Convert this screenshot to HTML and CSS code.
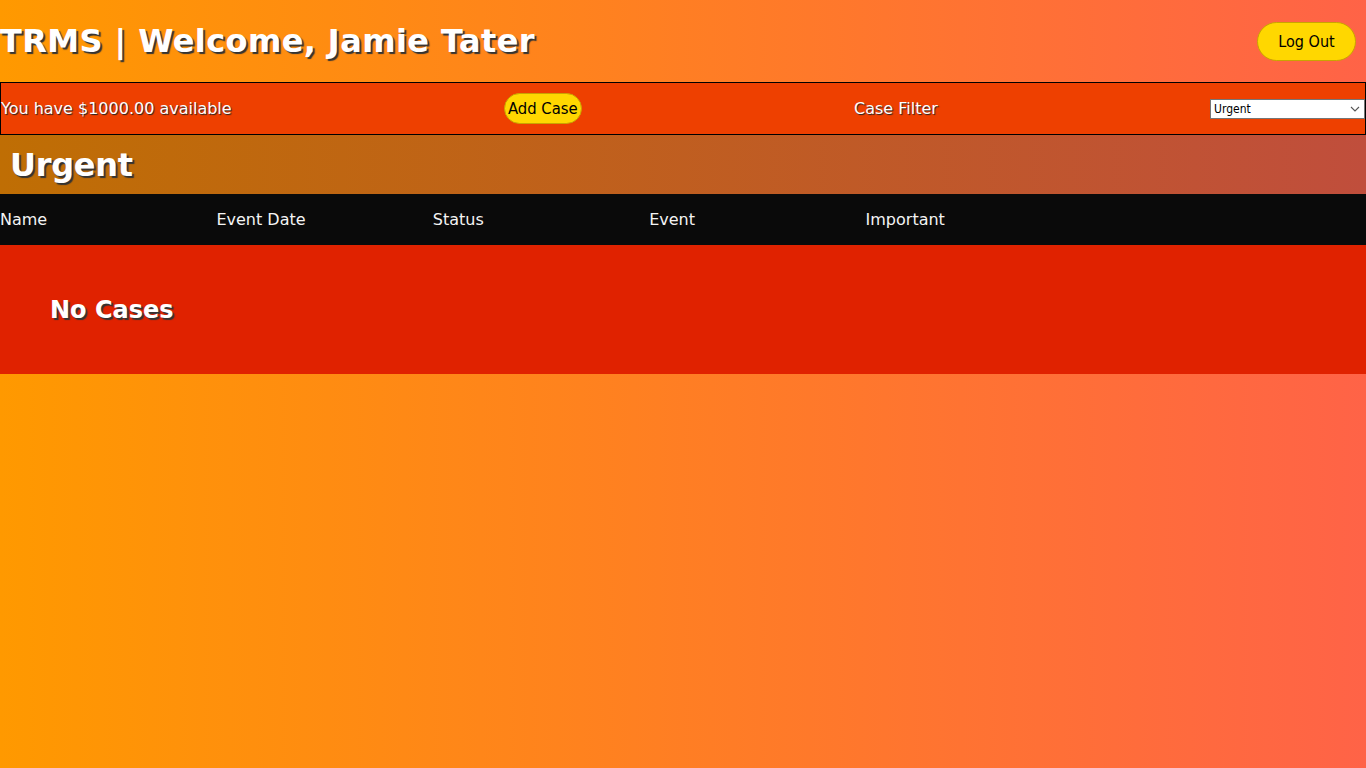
FILE: index.html
```html
<!DOCTYPE html>
<html lang="en">
<head>
<meta charset="utf-8">
<title>TRMS</title>
<link rel="stylesheet" href="styles.css">
</head>
<body>
<header class="top">
  <h1 class="title">TRMS | Welcome, Jamie Tater</h1>
  <button class="pill logout">Log Out</button>
</header>
<div class="toolbar">
  <span class="tb-text">You have $1000.00 available</span>
  <button class="pill add">Add Case</button>
  <span class="tb-text">Case Filter</span>
  <select class="filter">
    <option>Urgent</option>
    <option>All</option>
  </select>
</div>
<h2 class="section">Urgent</h2>
<div class="thead">
  <span>Name</span>
  <span>Event Date</span>
  <span>Status</span>
  <span>Event</span>
  <span>Important</span>
</div>
<div class="empty">
  <h3 class="empty-text">No Cases</h3>
</div>
</body>
</html>
```

FILE: styles.css
```css
html {
  min-height: 100%;
  background: linear-gradient(to right, #ff9900, #ff6347);
}
body {
  margin: 0;
  min-height: 768px;
  font-family: "DejaVu Sans", Verdana, sans-serif;
  color: #fff;
}
.top {
  height: 82px;
  display: flex;
  align-items: center;
  justify-content: space-between;
  padding-right: 10px;
}
.title {
  margin: 0;
  font-size: 32px;
  font-weight: bold;
  color: #fff;
  text-shadow: 2px 2px 1px #333;
  letter-spacing: 0.4px;
}
.pill {
  font-family: "DejaVu Sans Condensed", "DejaVu Sans", sans-serif;
  background: #ffd700;
  color: #000;
  border: 1px solid #c9a400;
  font-size: 16px;
  cursor: pointer;
}
.logout {
  width: 99px;
  height: 39px;
  border-radius: 20px;
}
.toolbar {
  height: 51px;
  border: 1px solid #000;
  background: #ee4000;
  display: flex;
  align-items: center;
  justify-content: space-between;
}
.tb-text {
  font-size: 16px;
  text-shadow: 1px 1px 1px #222;
}
.add {
  width: 78px;
  height: 31px;
  border-radius: 16px;
  padding: 0;
  font-size: 16.5px;
}
.filter {
  width: 155px;
  height: 20px;
  padding: 0 0 0 3px;
  font-family: "DejaVu Sans Condensed", "DejaVu Sans", sans-serif;
  font-size: 12px;
  color: #000;
  border: 1px solid #767676;
  border-radius: 0;
  appearance: none;
  -webkit-appearance: none;
  background: #fff url("data:image/svg+xml,%3Csvg xmlns='http://www.w3.org/2000/svg' width='10' height='6' viewBox='0 0 10 6'%3E%3Cpath d='M1 1l4 4 4-4' fill='none' stroke='%23555' stroke-width='1.1'/%3E%3C/svg%3E") no-repeat right 4px center;
}
.section {
  margin: 0;
  height: 59px;
  line-height: 60px;
  padding-left: 10px;
  font-size: 32px;
  font-weight: bold;
  background: linear-gradient(to right, #bf6e04, #c04e3c);
  text-shadow: 2px 2px 1px #333;
  letter-spacing: -0.3px;
}
.thead {
  height: 51px;
  background: #0a0a0a;
  display: grid;
  grid-template-columns: repeat(5, 216.4px);
  align-items: center;
  font-size: 16px;
  color: #f4f4f4;
}
.empty {
  height: 129px;
  background: #e02200;
  display: flex;
  align-items: center;
  padding-left: 50px;
}
.empty-text {
  margin: 0;
  font-size: 24px;
  font-weight: bold;
  text-shadow: 2px 2px 1px #333;
}
```
